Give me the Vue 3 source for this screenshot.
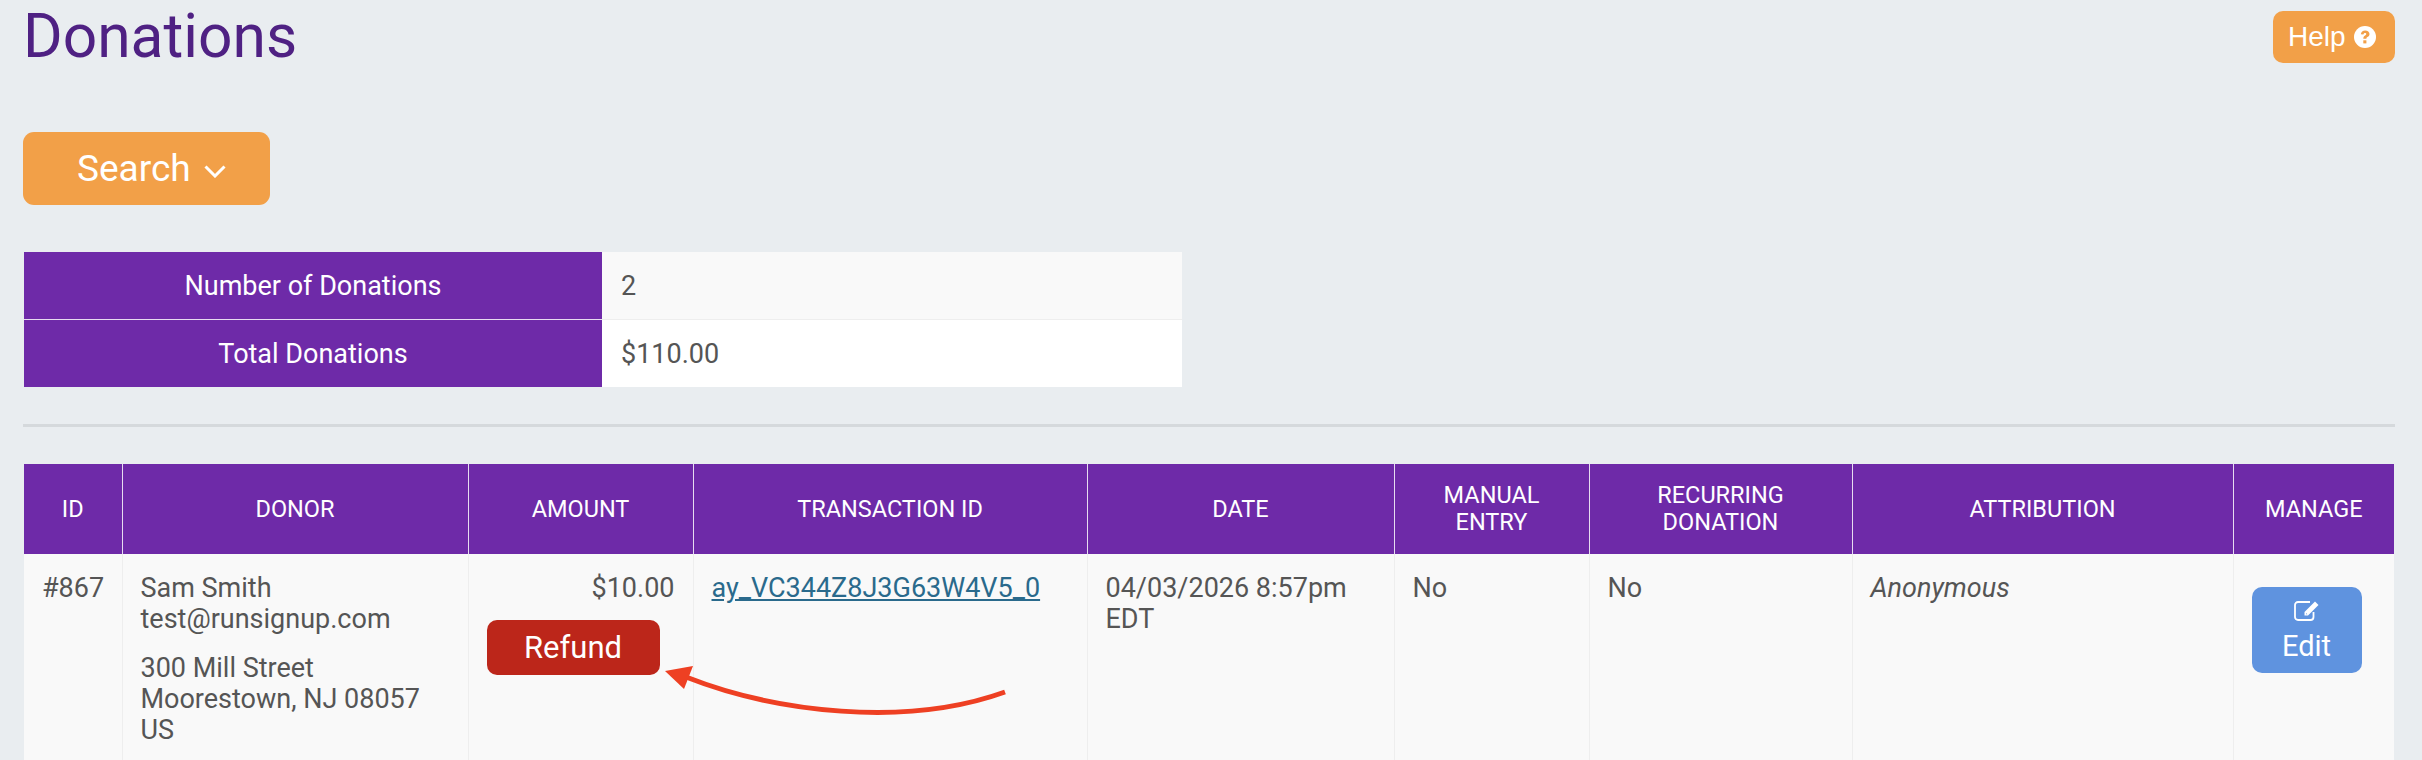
<script setup>
const summary = [
  { label: 'Number of Donations', value: '2' },
  { label: 'Total Donations', value: '$110.00' },
]
const columns = [
  { title: 'ID', width: 98 },
  { title: 'Donor', width: 346 },
  { title: 'Amount', width: 225 },
  { title: 'Transaction ID', width: 394 },
  { title: 'Date', width: 307 },
  { title: 'Manual Entry', width: 195 },
  { title: 'Recurring Donation', width: 263 },
  { title: 'Attribution', width: 381 },
  { title: 'Manage', width: 161 },
]
</script>

<template>
  <div class="page">
    <header class="top">
      <h1>Donations</h1>
      <button class="btn help">
        Help
        <svg class="help-icon" viewBox="0 0 22 22" aria-hidden="true">
          <circle cx="11" cy="11" r="11" fill="#fff" />
          <path d="M6.800 8.200C7.100 5.800 8.800 4.400 11.200 4.400c2.500 0 4.300 1.500 4.300 3.600 0 1.600-.9 2.400-2 3.100-.8.5-1.100.9-1.100 1.700H9.300c0-1.700.7-2.500 1.800-3.200.8-.5 1.200-.9 1.200-1.500 0-.7-.5-1.100-1.300-1.100-.9 0-1.400.6-1.600 1.500z" fill="#f2a048" />
          <rect x="9.300" y="14.300" width="3.100" height="3.100" fill="#f2a048" />
        </svg>
      </button>
    </header>

    <button class="btn search">
      Search
      <svg class="chevron" viewBox="0 0 22 13" aria-hidden="true">
        <path d="M1.500 1.500 11 11 20.500 1.500" fill="none" stroke="#fff" stroke-width="3" />
      </svg>
    </button>

    <table class="summary">
      <tbody>
        <tr v-for="row in summary" :key="row.label">
          <th>{{ row.label }}</th>
          <td>{{ row.value }}</td>
        </tr>
      </tbody>
    </table>

    <hr />

    <table class="donations">
      <colgroup>
        <col v-for="c in columns" :key="c.title" :style="{ width: c.width + 'px' }" />
      </colgroup>
      <thead>
        <tr>
          <th v-for="c in columns" :key="c.title">{{ c.title }}</th>
        </tr>
      </thead>
      <tbody>
        <tr>
          <td class="center">#867</td>
          <td>
            <p>Sam Smith<br />test@runsignup.com</p>
            <p>300 Mill Street<br />Moorestown, NJ 08057<br />US</p>
          </td>
          <td>
            <div class="amount">$10.00</div>
            <button class="btn refund">Refund</button>
          </td>
          <td><a href="#">ay_VC344Z8J3G63W4V5_0</a></td>
          <td>04/03/2026 8:57pm EDT</td>
          <td>No</td>
          <td>No</td>
          <td><em>Anonymous</em></td>
          <td>
            <button class="btn edit">
              <svg class="edit-icon" viewBox="0 0 26 21" aria-hidden="true">
                <path d="M19.500 12v5a3 3 0 0 1-3 3H4a3 3 0 0 1-3-3V5a3 3 0 0 1 3-3h12" fill="none" stroke="#fff" stroke-width="1.800" />
                <path d="M21 1.500 24.500 5 14 15.500H10.500V12z" fill="#fff" />
                <path d="M12 13v1.300h1.300z" fill="#5f93df" />
              </svg>
              <span>Edit</span>
            </button>
          </td>
        </tr>
      </tbody>
    </table>

    <svg class="arrow" width="2422" height="760" viewBox="0 0 2422 760" aria-hidden="true">
      <path d="M686 677C775 712 905 728 1005 692" fill="none" stroke="#ee4023" stroke-width="5" />
      <path d="M665 671 693 666 684 689z" fill="#ee4023" />
    </svg>
  </div>
</template>

<style>
html, body { margin: 0; overflow: hidden; background: #e9edf0; }
</style>

<style scoped>
.page {
  position: relative;
  box-sizing: border-box;
  width: 2422px;
  height: 760px;
  overflow: hidden;
  padding: 0 27px 0 24px;
  background: #e9edf0;
  font-family: Roboto, "Liberation Sans", sans-serif;
  color: #555;
}
.top {
  display: flex;
  justify-content: space-between;
  align-items: flex-start;
}
h1 {
  margin: 0 0 0 -1px;
  font-size: 60.500px;
  font-weight: 400;
  line-height: 73px;
  color: #4f2183;
}
.btn {
  border: 0;
  color: #fff;
  font-family: inherit;
  padding: 0;
}
.help {
  display: flex;
  align-items: center;
  gap: 8px;
  width: 122px;
  height: 52px;
  margin-top: 11px;
  padding-left: 15px;
  box-sizing: border-box;
  border-radius: 10px;
  background: #f2a048;
  font-size: 28px;
  font-family: "Liberation Sans", sans-serif;
}
.help-icon { width: 22px; height: 22px; }
.search {
  display: flex;
  align-items: center;
  box-sizing: border-box;
  width: 247px;
  height: 73px;
  margin: 59px 0 0 -1px;
  padding-left: 54px;
  border-radius: 11px;
  background: #f2a048;
  font-size: 37px;
}
.chevron { width: 22px; height: 13px; margin: 6px 0 0 13px; }
.summary {
  margin-top: 47px;
  width: 1158px;
  table-layout: fixed;
  border-collapse: collapse;
  font-size: 27px;
}
.summary th {
  width: 578px;
  height: 67px;
  padding: 0;
  background: #6e2aa8;
  color: #fff;
  font-weight: 400;
  border-bottom: 1px solid #e7dcf0;
}
.summary td {
  padding: 0 19px;
  background: #f9f9f9;
  border-bottom: 1px solid #eee;
}
.summary tr:last-child th, .summary tr:last-child td { border-bottom: 0; }
.summary tr:last-child td { background: #fff; }
hr {
  margin: 37px 0 0 -1px;
  border: 0;
  height: 3px;
  width: 2372px;
  background: #d5d9dc;
}
.donations {
  margin-top: 37px;
  width: 2370px;
  table-layout: fixed;
  border-collapse: collapse;
  font-size: 27px;
  line-height: 31px;
}
.donations th {
  height: 90px;
  padding: 0 18px;
  box-sizing: border-box;
  background: #6e2aa8;
  color: #fff;
  font-size: 23.500px;
  font-weight: 400;
  line-height: 27px;
  text-transform: uppercase;
  border-left: 1px solid #e7dcf0;
}
.donations th:first-child { border-left: 0; }
.donations td {
  padding: 19px 18px;
  background: #f9f9f9;
  vertical-align: top;
  border-left: 1px solid #eee;
}
.donations td:first-child { border-left: 0; }
.center { text-align: center; }
p { margin: 0 0 18px; }
p:last-child { margin-bottom: 0; }
.amount { text-align: right; }
.refund {
  display: block;
  width: 173px;
  height: 55px;
  margin-top: 16px;
  border-radius: 10px;
  background: #bc261a;
  font-size: 31px;
}
a { color: #2a6a8c; }
em { font-style: italic; }
.edit {
  display: flex;
  flex-direction: column;
  align-items: center;
  box-sizing: border-box;
  width: 110px;
  height: 86px;
  margin-top: 14px;
  padding-top: 13px;
  border-radius: 10px;
  background: #5f93df;
  font-size: 29px;
  line-height: 34px;
}
.edit-icon { width: 26px; height: 21px; margin-bottom: 8px; }
.arrow {
  position: absolute;
  left: 0;
  top: 0;
  pointer-events: none;
}
</style>
